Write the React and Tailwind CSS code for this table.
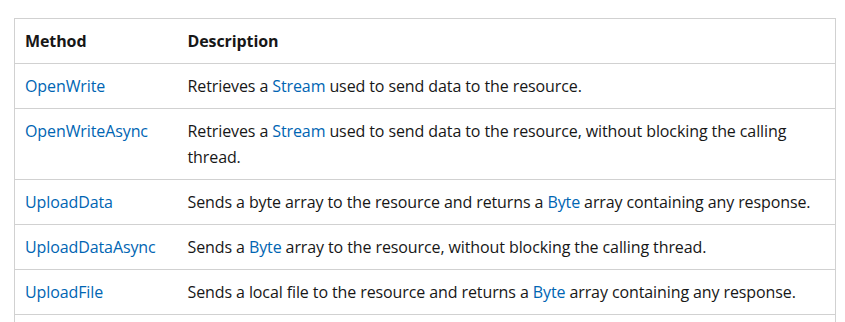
import React from "react";

const rows = [
  ["OpenWrite", <>Retrieves a <a className="text-[#0065b3]">Stream</a> used to send data to the resource.</>],
  ["OpenWriteAsync", <>Retrieves a <a className="text-[#0065b3]">Stream</a> used to send data to the resource, without blocking the calling thread.</>],
  ["UploadData", <>Sends a byte array to the resource and returns a <a className="text-[#0065b3]">Byte</a> array containing any response.</>],
  ["UploadDataAsync", <>Sends a <a className="text-[#0065b3]">Byte</a> array to the resource, without blocking the calling thread.</>],
  ["UploadFile", <>Sends a local file to the resource and returns a <a className="text-[#0065b3]">Byte</a> array containing any response.</>],
  ["UploadFileAsync", <>Sends a local file to the resource, without blocking the calling thread.</>],
];

export default function App() {
  return (
    <div className="bg-white pt-[18px] pl-[14px] text-[16px] tracking-[-0.1px] text-[#171717]" style={{ fontFamily: '"Open Sans", "Noto Sans", sans-serif' }}>
      <table className="w-[822px] border-collapse border border-[#d1d1d1] text-left">
        <thead>
          <tr className="border-b border-[#d1d1d1]">
            <th className="w-[163px] py-[9px] px-[10px] leading-[26px] font-bold">Method</th>
            <th className="py-[9px] px-[10px] leading-[26px] font-bold">Description</th>
          </tr>
        </thead>
        <tbody>
          {rows.map(([m, d]) => (
            <tr key={m} className="border-b border-[#d1d1d1]">
              <td className="py-[9px] px-[10px] leading-[26px] align-top text-[#0065b3]">{m}</td>
              <td className="py-[9px] px-[10px] leading-[26px] align-top">{d}</td>
            </tr>
          ))}
        </tbody>
      </table>
    </div>
  );
}
